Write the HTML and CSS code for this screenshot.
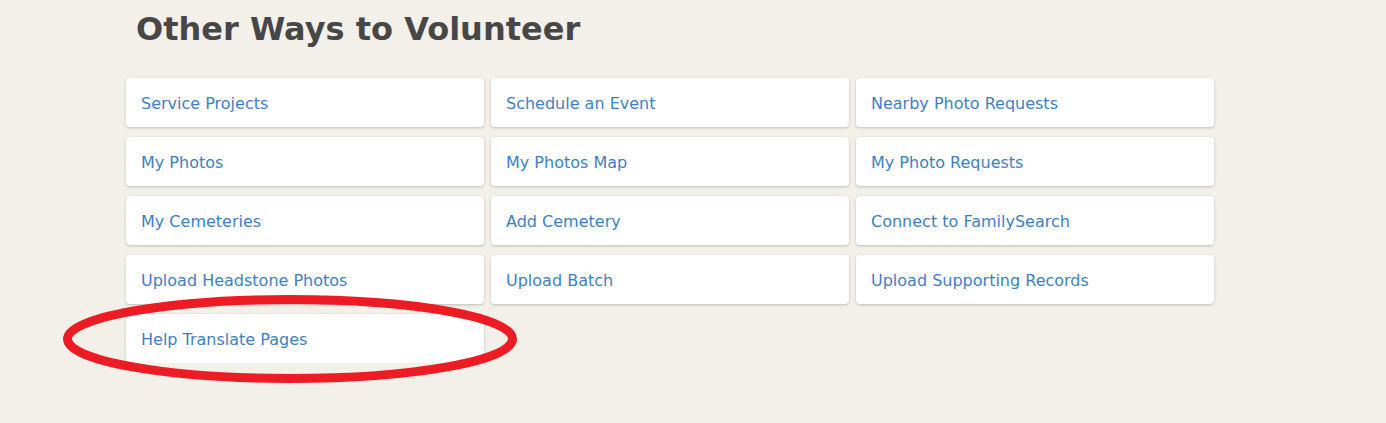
FILE: index.html
```html
<!DOCTYPE html>
<html>
<head>
<meta charset="utf-8">
<link rel="stylesheet" href="styles.css">
</head>
<body>
<div class="wrap">
  <h2 class="title">Other Ways to Volunteer</h2>
  <div class="grid">
    <a class="card" href="#">Service Projects</a>
    <a class="card" href="#">Schedule an Event</a>
    <a class="card" href="#">Nearby Photo Requests</a>
    <a class="card" href="#">My Photos</a>
    <a class="card" href="#">My Photos Map</a>
    <a class="card" href="#">My Photo Requests</a>
    <a class="card" href="#">My Cemeteries</a>
    <a class="card" href="#">Add Cemetery</a>
    <a class="card" href="#">Connect to FamilySearch</a>
    <a class="card" href="#">Upload Headstone Photos</a>
    <a class="card" href="#">Upload Batch</a>
    <a class="card" href="#">Upload Supporting Records</a>
    <a class="card" href="#">Help Translate Pages</a>
  </div>
</div>
<svg class="circle" width="470" height="100" viewBox="0 0 470 100">
  <ellipse cx="230" cy="49" rx="222.5" ry="39.5" fill="none" stroke="#ed1c24" stroke-width="9"/>
</svg>
</body>
</html>
```
FILE: styles.css
```css
html, body {
  margin: 0;
  padding: 0;
  background: #f3f0ea;
  font-family: "DejaVu Sans", Verdana, sans-serif;
}
.wrap {
  margin-left: 126px;
  width: 1088px;
  padding-top: 10px;
}
.title {
  margin: 0 0 30px 10px;
  font-size: 32px;
  line-height: 38px;
  font-weight: bold;
  color: #474747;
}
.grid {
  display: grid;
  grid-template-columns: repeat(3, 358px);
  column-gap: 7px;
  row-gap: 10px;
}
.card {
  display: flex;
  align-items: center;
  height: 49px;
  box-sizing: border-box;
  padding: 2px 15px 0;
  background: #fff;
  border-radius: 4px;
  box-shadow: 0 1px 3px rgba(0, 0, 0, 0.22);
  color: #3f7fc1;
  text-decoration: none;
  font-size: 16px;
}
.circle {
  position: absolute;
  left: 60px;
  top: 290px;
}
```
